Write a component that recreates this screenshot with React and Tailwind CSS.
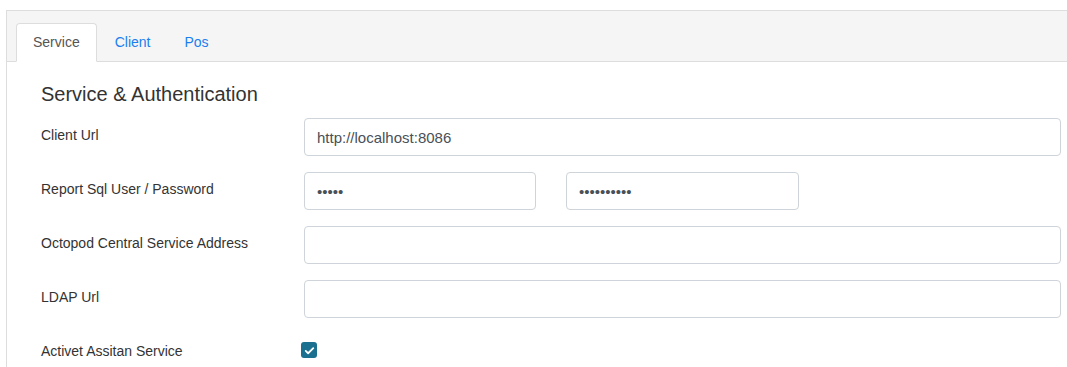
export default function App() {
  const rows = [
    { label: 'Client Url', kind: 'text', value: 'http://localhost:8086' },
    { label: 'Report Sql User / Password', kind: 'pair' },
    { label: 'Octopod Central Service Address', kind: 'text', value: '' },
    { label: 'LDAP Url', kind: 'text', value: '' },
  ]

  const inputCls =
    'h-[38px] rounded-[4px] border border-[#ced4da] bg-white px-3 text-[15px] text-[#495057] outline-none'

  return (
    <div className="w-full h-[367px] overflow-hidden bg-white pl-[6px] pt-[10px] font-['Liberation_Sans',Arial,sans-serif]">
      <div className="w-[1075px] border border-[#dddddd] border-r-0">
        {/* Tabs */}
        <div className="h-[51px] bg-[#f5f5f5] border-b border-[#dddddd] flex items-end pl-[9px]">
          <ul className="flex -mb-px">
            <li className="mr-[2px] h-[39px] px-[16px] flex items-center bg-white border border-[#dddddd] border-b-white rounded-t-[4px] text-[14px] text-[#555555]">
              Service
            </li>
            <li className="mr-[2px] h-[39px] px-[16px] flex items-center text-[14px] text-[#1a7ff0]">
              Client
            </li>
            <li className="mr-[2px] h-[39px] px-[16px] flex items-center text-[14px] text-[#1a7ff0]">
              Pos
            </li>
          </ul>
        </div>

        {/* Body */}
        <div className="pl-[34px] pt-[21px] pb-4">
          <h3 className="text-[20px] leading-[22px] text-[#333333] mb-[13px]">Service &amp; Authentication</h3>

          <div className="flex flex-col gap-4">
            {rows.map((r) => (
              <div key={r.label} className="flex h-[38px]">
                <label className="w-[263px] shrink-0 pt-[7px] text-[14px] leading-[20px] text-[#333333]">
                  {r.label}
                </label>
                {r.kind === 'text' ? (
                  <input readOnly defaultValue={r.value} className={`${inputCls} w-[757px]`} />
                ) : (
                  <div className="flex gap-[30px]">
                    <input readOnly type="password" defaultValue="12345" className={`${inputCls} w-[232px]`} />
                    <input readOnly type="password" defaultValue="1234567890" className={`${inputCls} w-[233px]`} />
                  </div>
                )}
              </div>
            ))}

            <div className="flex h-[32px] items-center">
              <label className="w-[263px] shrink-0 pt-[1px] text-[14px] leading-[20px] text-[#333333]">
                Activet Assitan Service
              </label>
              <span className="-ml-[3px] w-4 h-4 rounded-[3px] bg-[#1b6f8f] flex items-center justify-center">
                <svg viewBox="0 0 16 16" className="w-[11px] h-[11px]">
                  <path d="M2.5 8.5l3.5 3.5 7.5-7.5" fill="none" stroke="white" strokeWidth="2.6" strokeLinecap="round" strokeLinejoin="round" />
                </svg>
              </span>
            </div>
          </div>
        </div>
      </div>
    </div>
  )
}
